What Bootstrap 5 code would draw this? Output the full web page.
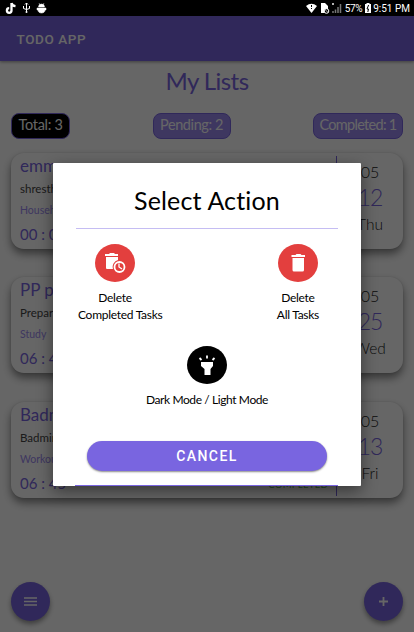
<!DOCTYPE html>
<html lang="en">
<head>
<meta charset="utf-8">
<meta name="viewport" content="width=device-width, initial-scale=1">
<title>Todo App</title>
<link href="https://cdn.jsdelivr.net/npm/bootstrap@5.3.0/dist/css/bootstrap.min.css" rel="stylesheet">
<style>
:root{--brand:#7965e0}
body{width:414px;height:632px;overflow:hidden;background:#fff;font-family:"Coming Soon","Lato","Open Sans",sans-serif;color:#000}
.status{height:16px;background:#000;color:#fff;font:10px/17px Roboto,sans-serif}
.screen{height:616px}
.appbar{height:45px;background:var(--brand);color:#fff;font:500 13.5px/47px Roboto,sans-serif;letter-spacing:.6px;box-shadow:0 1px 3px #0006;padding-left:16.5px}
.page-title{font-size:24px;line-height:32px;color:var(--brand);margin:4px 0 16px;letter-spacing:-.55px}
.stats{padding:0 11px}
.pill{height:26px;border:1.5px solid var(--brand);border-radius:8px;background:#9c8af0;color:#fff;font-size:14.5px;line-height:22px;text-align:center;white-space:nowrap}
.pill.total{background:#000;width:59px;letter-spacing:-.3px}
.pill.pending{width:78px;letter-spacing:-.4px}
.pill.done{width:90px;letter-spacing:-.7px}
.tasks{padding:14px 11px 0;gap:28.3px}
.task{height:96px;border-radius:13px;background:#fff;box-shadow:0 5px 9px #0007,0 0 2px #0002}
.task-main{width:326px;padding:2px 8px 0 9px;border-right:1px solid var(--brand);margin:3px 0 2px;white-space:nowrap}
.task-title{font-size:17px;line-height:19px;margin-top:-2px;color:var(--brand)}
.task-text{font-size:11.5px;line-height:28px;color:#444}
.task-kind{font-size:10.5px;line-height:15px;color:#9c8af0}
.task-foot{font-size:15px;line-height:33px;color:var(--brand)}
.task-state{font-size:9.5px;color:#56b85a;letter-spacing:.3px;padding-top:1px}
.task-date{width:66px;padding-top:8px;font-size:16px;font-weight:300;line-height:22px;color:#222}
.task-day{font-size:23px;line-height:28px;color:var(--brand);letter-spacing:-1px}
.task-week{line-height:27px;font-size:15.5px}
.fabs{padding:0 11px 11px}
.fab{width:39px;height:39px;background:var(--brand);box-shadow:0 3px 5px #0006}
.scrim{inset:0;background:rgba(0,0,0,.6);padding:147px 0 0 53px}
.sheet{width:308px;height:323px;background:#fff;box-shadow:0 5px 16px #0007;padding:0 23px;border-radius:1px}
.sheet-title{font-size:25px;line-height:38px;margin:18px 0 9px;letter-spacing:.15px}
.rule{height:1px;background:#c5bdf3}
.action{font-size:12px;line-height:17px;letter-spacing:-.28px}
.disc{width:40px;height:38px;border-radius:50%;background:#e33f3e;margin-bottom:7px}
.disc.dark{background:#000}
.choices{padding:15px 19px 0 2px}
.lead-item{width:74px}
.under{width:74px;white-space:nowrap}
.mode{margin-top:23px;letter-spacing:-.4px}
.cancel{width:240px;height:30px;margin-top:33px;border:0;border-radius:15px;background:var(--brand);color:#fff;font:500 14px/31px Roboto,sans-serif;letter-spacing:1.4px;padding:0;box-shadow:0 1px 2px #0007}
.end-rule{height:1px;background:var(--brand);margin-left:-1px}
</style>
<script src="https://cdn.jsdelivr.net/npm/bootstrap@5.3.0/dist/js/bootstrap.bundle.min.js"></script>
</head>
<body>
<div class="status d-flex justify-content-between">
  <svg width="60" height="16" fill="none" stroke="#fff"><path d="M11.500 3v7.500a2.300 2.300 0 1 1-2.300-2.300M11.500 3c.4 2 2 3 4 3.200" stroke-width="2.300"/><path d="M26.500 3v9M23.500 6v2.500l3 1 3-1V6M25 4.500l1.500-1.500 1.500 1.500"/><circle cx="26.500" cy="12" r="1" fill="#fff" stroke="none"/><path d="M38.500 7a3 3 0 0 1 6 0zM37 8h9v2h-1c0 2-1.500 3-3.500 3S38 12 38 10h-1zM39 3l1 2M44 3l-1 2" fill="#fff" stroke-width=".5"/></svg>
  <div class="d-flex pe-1">
    <svg width="39" height="16"><path d="M0 6q5.500-4.500 11 0L5.500 13z" fill="#fff"/><path d="M5.500 5v2M5.500 8v1" stroke="#000"/><path d="M15 3h4l3 3v3l-2 4h-5z" fill="#fff"/><circle cx="20.500" cy="11" r="2.300" fill="#000" stroke="#fff"/><path d="M19 9.500l3 3M26 3l2 2m0-2l-2 2" stroke="#fff" stroke-width=".7"/><path d="M27 13v-2M29.500 13V9.500M32 13V7M34.500 13V4" stroke="#777" stroke-width="1.500"/></svg>
    <span style="letter-spacing:-.35px">57%</span>
    <svg style="margin-left:3px" width="8" height="16"><path d="M0 4h1.500V3h3v1H6v9H0z" fill="#fff"/><path d="M3.600 5L2 9h1.500L2.800 12" fill="none" stroke="#000"/></svg>
    <span>9:51 PM</span>
  </div>
</div>
<div class="screen position-relative d-flex flex-column">
  <header class="appbar">TODO APP</header>
  <h1 class="page-title text-center fw-normal">My Lists</h1>
  <div class="stats d-flex justify-content-between">
    <div class="pill total">Total: 3</div><div class="pill pending">Pending: 2</div><div class="pill done">Completed: 1</div>
  </div>
  <main class="tasks d-flex flex-column">
    <article class="task d-flex">
      <div class="task-main"><div class="task-title">emma</div><div class="task-text">shresth</div><div class="task-kind">Household</div><div class="task-foot">00 : 00</div></div>
      <div class="task-date text-center"><div>05</div><div class="task-day">12</div><div class="task-week">Thu</div></div>
    </article>
    <article class="task d-flex">
      <div class="task-main"><div class="task-title">PP presentation</div><div class="task-text">Preparation</div><div class="task-kind">Study</div><div class="task-foot">06 : 45</div></div>
      <div class="task-date text-center"><div>05</div><div class="task-day">25</div><div class="task-week">Wed</div></div>
    </article>
    <article class="task d-flex">
      <div class="task-main"><div class="task-title">Badminton</div><div class="task-text">Badminton</div><div class="task-kind">Workout</div><div class="task-foot d-flex justify-content-between">06 : 45<span class="task-state">COMPLETED</span></div></div>
      <div class="task-date text-center"><div>05</div><div class="task-day">13</div><div class="task-week">Fri</div></div>
    </article>
  </main>
  <div class="fabs d-flex justify-content-between mt-auto">
    <div class="fab rounded-circle d-flex align-items-center justify-content-center"><svg width="13" height="9" stroke="#fff" stroke-width="1.300"><path d="M0 1h13M0 4.500h13M0 8h13"/></svg></div>
    <div class="fab rounded-circle d-flex align-items-center justify-content-center"><svg width="9" height="9" stroke="#fff" stroke-width="1.800"><path d="M0 4.500h9M4.500 0v9"/></svg></div>
  </div>
  <div class="scrim position-absolute">
    <section class="sheet d-flex flex-column" role="dialog" aria-label="Select Action">
      <h2 class="sheet-title text-center fw-normal">Select Action</h2>
      <div class="rule"></div>
      <div class="choices d-flex justify-content-between">
        <div class="action lead-item d-flex flex-column align-items-center"><div class="disc"><svg width="40" height="38"><path d="M10 10h4l1-1h4l1 1h3v2H10zM11 13h12v3a7 7 0 0 0-5 9h-6q-1 0-1-1z" fill="#fff"/><circle cx="24.500" cy="23" r="5" fill="#e33f3e" stroke="#fff" stroke-width="1.800"/><path d="M24 19.500V23l3 2" fill="none" stroke="#fff" stroke-width="1.300"/></svg></div><span>Delete</span><span class="under">Completed Tasks</span></div>
        <div class="action d-flex flex-column align-items-center"><div class="disc"><svg width="40" height="38"><path d="M13.500 11h4l1-1h4l1 1h3.500v2H13.500zM14.500 14h11.500v12q0 1.500-1.500 1.500H16q-1.500 0-1.500-1.500z" fill="#fff"/></svg></div><span>Delete</span><span>All Tasks</span></div>
      </div>
      <div class="action mode d-flex flex-column align-items-center"><div class="disc dark"><svg width="40" height="38"><path d="M14 16h12v4l-2.500 3v6h-6v-6L14 20z" fill="#fff"/><path d="M20 9.500v3M12.500 12l2 2M27.500 12l-2 2" stroke="#fff" stroke-width="1.800"/></svg></div><span>Dark Mode / Light Mode</span></div>
      <button class="btn cancel align-self-center flex-shrink-0">CANCEL</button>
      <div class="end-rule mt-auto"></div>
    </section>
  </div>
</div>
</body>
</html>
